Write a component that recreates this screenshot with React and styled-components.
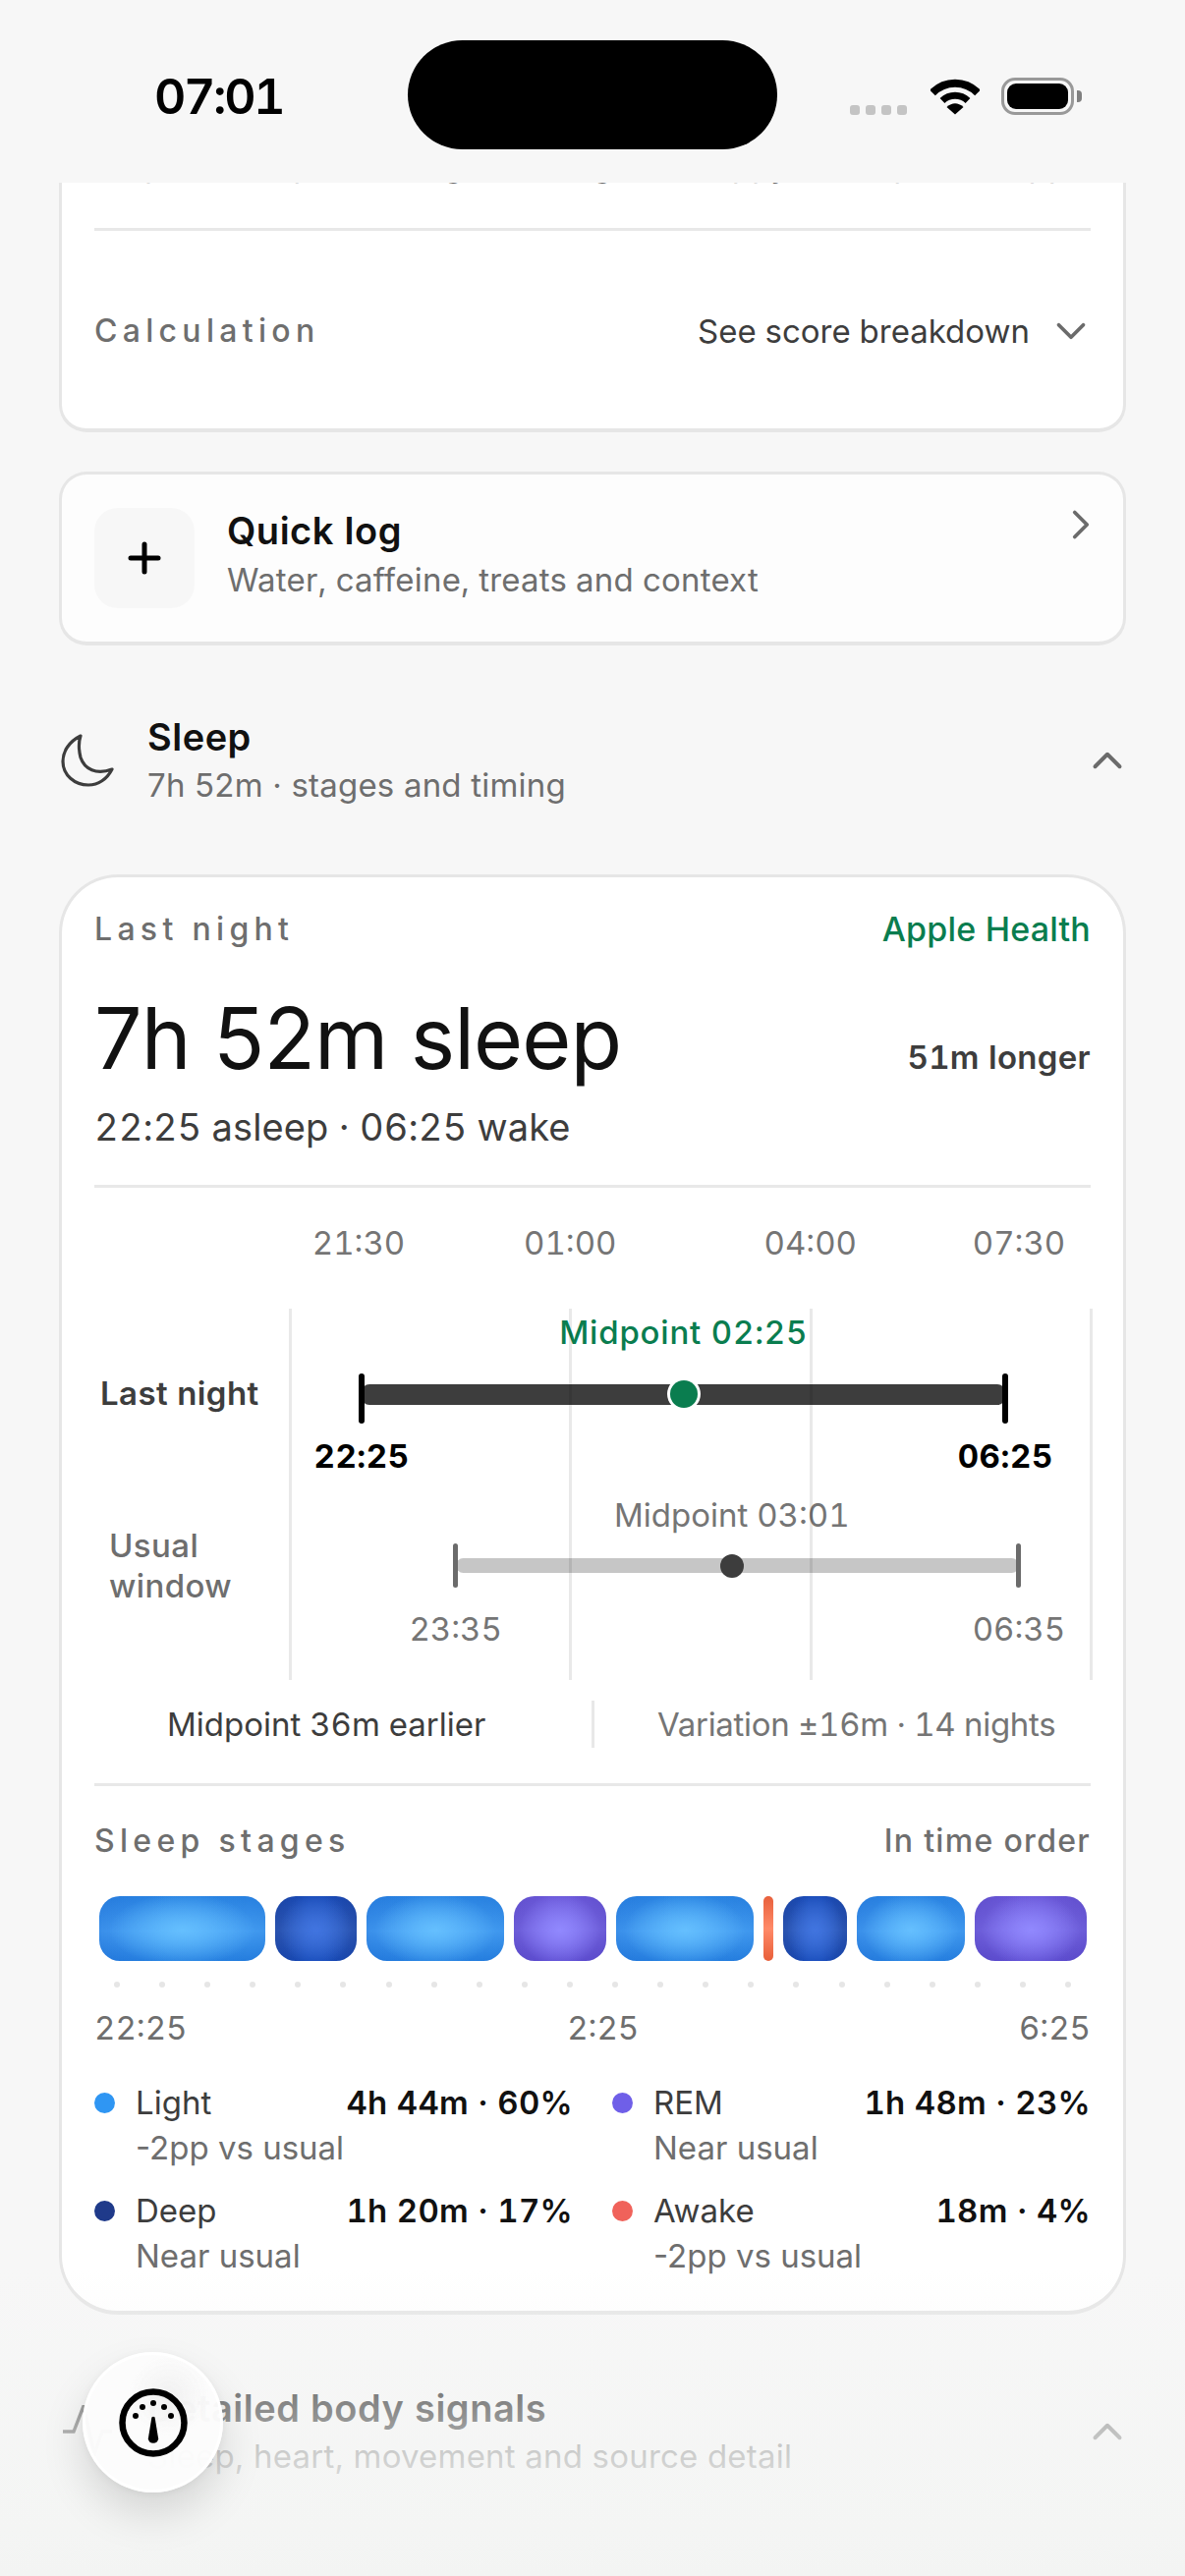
import React from "react";
import styled, { createGlobalStyle, css } from "styled-components";
import { ChevronDown, ChevronRight, ChevronUp, Plus } from "lucide-react";

const GlobalStyle = createGlobalStyle`
  html, body { margin: 0; padding: 0; background: #f7f7f7; }
  body { font-family: Inter, "Noto Sans", "Liberation Sans", sans-serif; color: #111; font-variant-numeric: tabular-nums; }
  * { box-sizing: border-box; }
`;

const Page = styled.div`
  position: relative; width: 1206px; height: 2622px; overflow: hidden;
  display: flex; flex-direction: column; background: #f7f7f7;
`;

/* status bar */
const StatusBar = styled.header`
  flex: none; height: 186px; padding: 41px 0 0 157px;
  display: flex; align-items: flex-start; background: #f7f7f7;
`;
const Clock = styled.div`
  width: 258px; margin-top: 39px; font-size: 50px; line-height: 37px; font-weight: 600;
  letter-spacing: -2.3px; color: #000;
`;
const Island = styled.div`width: 376px; height: 111px; border-radius: 56px; background: #000;`;
const StatusIcons = styled.div`
  margin: 37px 0 0 74px; height: 39px; display: flex; align-items: center;
`;
const SignalDots = styled.div`
  align-self: flex-end; display: flex; gap: 6px; margin-right: 24px;
`;
const SignalDot = styled.span`width: 10px; height: 10px; border-radius: 3px; background: #c4c4c4;`;
const Battery = styled.div`
  position: relative; margin-left: 22px; width: 74px; height: 38px; padding: 3px;
  border: 3px solid #999; border-radius: 14px;
  &::after {
    content: ""; position: absolute; right: -11px; top: 10px; width: 5px; height: 12px;
    background: #808080; border-radius: 0 4px 4px 0;
  }
`;
const BatteryFill = styled.div`width: 100%; height: 100%; background: #000; border-radius: 9px;`;

/* scrolling area */
const Viewport = styled.main`flex: 1; overflow: hidden; min-height: 0;`;
const Scroller = styled.div`margin-top: -40px; padding: 0 60px;`;

const Card = styled.section`
  background: #fff; border: 3px solid #e6e6e6; border-bottom-width: 4px; border-radius: 28px; padding: 0 33px;
`;
const ClippedLine = styled.p`
  margin: -1px 0 44px; height: 40px; font-size: 33px; line-height: 40px; white-space: nowrap;
  overflow: hidden; color: #6b6b6b;
`;
const Rule = styled.hr`
  margin: ${(p) => p.$top || 0}px 0 0; border: 0; height: 3px; background: #e8e8e8;
`;
const CalcRow = styled.div`
  margin: 82px 0 79px; height: 40px; display: flex; align-items: center; justify-content: space-between;
`;
const Eyebrow = styled.span`
  font-size: 32px; line-height: 40px; font-weight: 500; letter-spacing: 5.3px; color: #6e6e6e;
`;
const PlainEyebrow = styled(Eyebrow)`letter-spacing: 1.3px;`;
const CalcLink = styled.span`
  display: flex; align-items: center; gap: 17px; font-size: 33px; line-height: 40px; color: #3d3d3d;
  margin-right: -5px;
`;

/* quick log */
const QuickLog = styled(Card)`
  margin-top: 40px; height: 177px; padding: 34px 33px; display: flex; align-items: flex-start;
  background: #fdfdfd;
`;
const Tile = styled.div`
  flex: none; width: 102px; height: 102px; border-radius: 24px; background: #f7f7f7;
  display: flex; align-items: center; justify-content: center; margin-right: 33px;
`;
const QuickText = styled.div`flex: 1;`;
const QuickTitle = styled.div`font-size: 38px; line-height: 44px; margin-top: 1px; font-weight: 600; color: #111; letter-spacing: 0.5px;`;
const Muted = styled.div`font-size: 33px; line-height: 40px; color: #6e6e6e; letter-spacing: 0.2px;`;
const QuickSub = styled(Muted)`margin-top: 8px;`;
const QuickChevron = styled.div`margin: -8px -15px 0 0; color: #6b6b6b; display: flex;`;

/* section headers */
const SectionHead = styled.div`
  margin-top: ${(p) => p.$top}px; display: flex; align-items: center; color: #3d3d3d;
`;
const SectionIcon = styled.svg`flex: none; width: 54px; height: 54px; margin: 0 34px 0 2px;`;
const SectionText = styled.div`flex: 1;`;
const SectionTitle = styled.div`font-size: 38px; line-height: 44px; font-weight: 600; color: #111; letter-spacing: 0.5px;`;
const SectionSub = styled(Muted)`margin-top: 7px; font-variant-numeric: proportional-nums;`;
const SectionChevron = styled.div`display: flex; margin-right: -6px; color: #6b6b6b;`;

/* sleep card */
const SleepCard = styled(Card)`margin-top: 71px; border-radius: 60px; padding: 33px 33px 36px;`;
const SpreadRow = styled.div`
  display: flex; justify-content: space-between; align-items: center; height: 40px;
  margin-top: ${(p) => p.$top || 0}px;
`;
const SourceTag = styled.span`font-size: 34px; line-height: 40px; font-weight: 500; color: #0a7d4f; letter-spacing: 0.2px;`;
const HeroRow = styled.div`margin-top: 41px; display: flex; justify-content: space-between; align-items: baseline;`;
const HeroValue = styled.div`font-size: 86px; line-height: 100px; letter-spacing: -0.9px; color: #111; font-variant-numeric: proportional-nums;`;
const HeroDelta = styled.div`font-size: 33px; font-weight: 600; color: #3d3d3d; letter-spacing: 0.3px;`;
const HeroSub = styled.div`margin-top: 17px; font-size: 38px; line-height: 46px; color: #3d3d3d; letter-spacing: 0.1px;`;

/* timeline chart */
const AxisRow = styled.div`position: relative; margin: 36px 0 0 199px; height: 40px;`;
const AxisTick = styled.span`
  position: absolute; top: 0; transform: translateX(-50%); font-size: 33px; line-height: 40px; color: #757575;
`;
const Chart = styled.div`
  position: relative; margin-top: 47px; height: 378px;
  display: grid; grid-template-columns: 199px 817px; grid-template-rows: 187px 191px;
`;
const GridLines = styled.div`position: absolute; inset: 0 0 0 199px; pointer-events: none; z-index: 2;`;
const GridLine = styled.span`
  position: absolute; top: 0; bottom: 0; width: 3px; margin-left: -1px; background: rgba(0, 0, 0, 0.085);
`;
const RowLabel = styled.div`
  display: flex; align-items: center; padding-left: ${(p) => (p.$usual ? 15 : 6)}px;
  height: ${(p) => (p.$usual ? 150 : 173)}px;
  font-size: 33px; line-height: 41px; font-weight: ${(p) => (p.$usual ? 500 : 600)};
  letter-spacing: 0.4px;
  color: ${(p) => (p.$usual ? "#6e6e6e" : "#3d3d3d")};
`;
const Plot = styled.div`display: flex; flex-direction: column; margin-left: -2px; padding-top: ${(p) => p.$top}px;`;
const LabelLane = styled.div`position: relative; height: 40px; flex: none; margin-top: ${(p) => p.$top || 0}px;`;
const LaneLabel = styled.span`
  position: absolute; top: 0; transform: translateX(-50%); white-space: nowrap; font-size: 33px; line-height: 40px;
  ${(p) => p.$tone === "green" && css`color: #0a7d4f; font-weight: 500; letter-spacing: 0.8px;`}
  ${(p) => p.$tone === "grey" && css`color: #757575;`}
  ${(p) => p.$tone === "strong" && css`color: #000; font-weight: 700; letter-spacing: 0.6px;`}
`;
const Track = styled.div`position: relative; height: ${(p) => p.$h}px; margin-top: ${(p) => p.$top}px; flex: none;`;
const RangeBar = styled.div`
  position: absolute; top: ${(p) => p.$y}px; height: ${(p) => p.$h}px; border-radius: 8px;
  background: ${(p) => p.$color};
`;
const EndTick = styled.span`
  position: absolute; top: 0; bottom: 0; margin-left: -3px; width: ${(p) => p.$w}px; border-radius: 3px;
  background: ${(p) => p.$color};
`;
const MidDot = styled.span`
  position: absolute; top: 50%; transform: translate(-50%, -50%); z-index: 3;
  width: ${(p) => p.$size}px; height: ${(p) => p.$size}px; border-radius: 50%;
  background: ${(p) => p.$color};
  ${(p) => p.$ring && css`box-shadow: 0 0 0 3px #fff;`}
`;

const SummaryRow = styled.div`margin-top: 21px; height: 48px; display: flex; align-items: center;`;
const SummaryCell = styled.div`
  font-size: 33px; line-height: 40px; white-space: nowrap;
  ${(p) => (p.$muted
    ? css`color: #757575; padding-left: 64px; letter-spacing: -0.3px;`
    : css`color: #3d3d3d; width: 506px; padding-left: 74px;`)}
`;
const SummaryDivider = styled.span`width: 3px; height: 48px; background: #e8e8e8; flex: none;`;

/* stages */
const stageFills = {
  light: css`
    background:
      radial-gradient(ellipse 44% 56% at 50% 52%, rgba(104, 194, 255, 0.9), rgba(80, 170, 255, 0) 100%),
      linear-gradient(90deg, rgba(28, 104, 210, 0.35), rgba(40, 130, 230, 0) 40%, rgba(40, 130, 230, 0) 60%, rgba(28, 110, 210, 0.25)),
      linear-gradient(180deg, #2a84e2 0%, #4aa4f6 54%, #2680e0 100%);
  `,
  deep: css`
    background:
      radial-gradient(ellipse 44% 56% at 50% 52%, rgba(66, 118, 226, 0.9), rgba(60, 110, 220, 0) 100%),
      linear-gradient(90deg, rgba(22, 50, 130, 0.4), rgba(22, 50, 130, 0) 40%, rgba(22, 50, 130, 0) 60%, rgba(22, 50, 130, 0.4)),
      linear-gradient(180deg, #1a4cb8 0%, #3566ca 52%, #184cba 100%);
  `,
  rem: css`
    background:
      radial-gradient(ellipse 44% 56% at 50% 52%, rgba(146, 138, 255, 0.95), rgba(130, 120, 250, 0) 100%),
      linear-gradient(90deg, rgba(76, 58, 180, 0.35), rgba(76, 58, 180, 0) 40%, rgba(76, 58, 180, 0) 60%, rgba(76, 58, 180, 0.35)),
      linear-gradient(180deg, #6a58d8 0%, #7c6eea 52%, #5f4fd2 100%);
  `,
  awake: css`
    background: linear-gradient(180deg, #e8603c 0%, #ff8a68 50%, #e85f3a 100%);
  `,
};
const StageBar = styled.div`margin-top: 36px; padding: 0 4px 0 5px; display: flex; gap: 10px; height: 66px;`;
const Stage = styled.div`
  flex: ${(p) => p.$w} 1 0; min-width: 0;
  border-radius: ${(p) => (p.$kind === "awake" ? 5 : 21)}px;
  ${(p) => stageFills[p.$kind]}
`;
const DotRow = styled.div`margin-top: 21px; padding: 0 20px; display: flex; justify-content: space-between;`;
const AxisDot = styled.span`width: 6px; height: 6px; border-radius: 50%; background: #e6e6e6;`;
const StageAxis = styled.div`
  margin-top: 21px; display: flex; justify-content: space-between;
  font-size: 33px; line-height: 40px; color: #6e6e6e;
`;
const Legend = styled.div`margin-top: 36px; display: grid; grid-template-columns: 1fr 1fr; gap: 24px 40px;`;
const LegendItem = styled.div`display: grid; grid-template-columns: 21px 1fr auto; column-gap: 21px; row-gap: 6px; align-items: center;`;
const LegendDot = styled.span`width: 21px; height: 21px; border-radius: 50%; background: ${(p) => p.$color};`;
const LegendName = styled.span`font-size: 33px; line-height: 40px; color: #3d3d3d;`;
const LegendValue = styled.span`font-size: 33px; line-height: 40px; font-weight: 600; color: #111; white-space: nowrap; letter-spacing: 0.3px;`;
const LegendNote = styled.span`grid-column: 2 / 4; font-size: 33px; line-height: 40px; color: #6e6e6e; font-variant-numeric: proportional-nums;`;

const NextCard = styled(Card)`margin-top: 74px; height: 300px;`;

/* overlays */
const BottomFade = styled.div`
  position: absolute; left: 0; right: 0; bottom: 0; height: 312px; pointer-events: none;
  background: linear-gradient(180deg, rgba(244, 245, 244, 0) 0%, rgba(244, 245, 244, 0.53) 45%, rgba(244, 245, 244, 0.98) 84%, rgba(243, 244, 243, 1) 100%);
`;
const Fab = styled.button`
  position: absolute; left: 84px; top: 2394px; width: 143px; height: 143px; padding: 0; border-radius: 50%;
  border: 3px solid rgba(255, 255, 255, 0.95);
  background:
    radial-gradient(circle at 62% 30%, rgba(236, 236, 236, 0.7), rgba(255, 255, 255, 0) 32%),
    rgba(252, 252, 252, 0.96);
  box-shadow: 0 22px 44px rgba(0, 0, 0, 0.13), 0 2px 8px rgba(0, 0, 0, 0.05);
  display: flex; align-items: center; justify-content: center;
`;

const minutesFromStart = (hhmm) => {
  const [h, m] = hhmm.split(":").map(Number);
  return (((h * 60 + m) - (21 * 60 + 30)) + 1440) % 1440;
};
const pct = (hhmm) => `${(minutesFromStart(hhmm) / 600) * 100}%`;

const stages = [
  ["light", 169], ["deep", 83], ["light", 140], ["rem", 93], ["light", 140],
  ["awake", 10], ["deep", 65], ["light", 110], ["rem", 114],
];
const legend = [
  { name: "Light", value: "4h 44m · 60%", note: "-2pp vs usual", color: "#2f96f3" },
  { name: "REM", value: "1h 48m · 23%", note: "Near usual", color: "#6f5fe8" },
  { name: "Deep", value: "1h 20m · 17%", note: "Near usual", color: "#1f3a8a" },
  { name: "Awake", value: "18m · 4%", note: "-2pp vs usual", color: "#f0625a" },
];

const Wifi = () => (
  <svg width="50" height="38" viewBox="0 0 50 38" fill="none" aria-hidden="true">
    <path d="M2 15.5 A32 32 0 0 1 48 15.5" stroke="#000" strokeWidth="8" />
    <path d="M12 23.5 A19 19 0 0 1 38 23.5" stroke="#000" strokeWidth="7" />
    <path d="M25 37.5 L16.5 30 Q25 22.5 33.5 30 Z" fill="#000" />
  </svg>
);

const Gauge = () => (
  <svg width="70" height="70" viewBox="-35 -35 70 70" aria-hidden="true">
    <circle cx="0" cy="0" r="31.5" fill="none" stroke="#000" strokeWidth="6.5" />
    {[[-18, -7], [-11, -16], [0, -20], [11, -16], [18, -7]].map(([x, y]) => (
      <circle key={x + "," + y} cx={x} cy={y} r="3" fill="#000" />
    ))}
    <path d="M-1.6 -5.5 Q0 -7 1.6 -5.5 L5.2 16.5 A5.3 5.3 0 0 1 -5.2 16.5 Z" fill="#000" />
  </svg>
);

export default function App() {
  return (
    <Page>
      <GlobalStyle />
      <StatusBar>
        <Clock>07:01</Clock>
        <Island />
        <StatusIcons>
          <SignalDots>
            <SignalDot /><SignalDot /><SignalDot /><SignalDot />
          </SignalDots>
          <Wifi />
          <Battery><BatteryFill /></Battery>
        </StatusIcons>
      </StatusBar>

      <Viewport>
        <Scroller>
          <Card>
            <ClippedLine>Steps, timed pace and goal, and gets a happy and top rated app</ClippedLine>
            <Rule />
            <CalcRow>
              <Eyebrow>Calculation</Eyebrow>
              <CalcLink>See score breakdown <ChevronDown size={50} strokeWidth={1.8} color="#6b6b6b" /></CalcLink>
            </CalcRow>
          </Card>

          <QuickLog as="section">
            <Tile><Plus size={48} strokeWidth={2.5} color="#000" /></Tile>
            <QuickText>
              <QuickTitle>Quick log</QuickTitle>
              <QuickSub>Water, caffeine, treats and context</QuickSub>
            </QuickText>
            <QuickChevron><ChevronRight size={50} strokeWidth={1.8} /></QuickChevron>
          </QuickLog>

          <SectionHead $top={71}>
            <SectionIcon viewBox="0 0 54 54" fill="none" aria-hidden="true">
              <path d="M20 2 C8 8 2 18 2 28 C2 42 14 52 28 52 C38 52 47 46 52 36 C36 42 24 36 20 24 C18 16 18 8 20 2 Z" stroke="#3d3d3d" strokeWidth="3.2" strokeLinejoin="round" />
            </SectionIcon>
            <SectionText>
              <SectionTitle>Sleep</SectionTitle>
              <SectionSub>7h 52m · stages and timing</SectionSub>
            </SectionText>
            <SectionChevron><ChevronUp size={50} strokeWidth={1.9} /></SectionChevron>
          </SectionHead>

          <SleepCard>
            <SpreadRow>
              <Eyebrow>Last night</Eyebrow>
              <SourceTag>Apple Health</SourceTag>
            </SpreadRow>
            <HeroRow>
              <HeroValue>7h 52m sleep</HeroValue>
              <HeroDelta>51m longer</HeroDelta>
            </HeroRow>
            <HeroSub>22:25 asleep · 06:25 wake</HeroSub>
            <Rule $top={36} />

            <AxisRow>
              <AxisTick style={{ left: 70 }}>21:30</AxisTick>
              <AxisTick style={{ left: pct("01:00") }}>01:00</AxisTick>
              <AxisTick style={{ left: pct("04:00") }}>04:00</AxisTick>
              <AxisTick style={{ left: 742 }}>07:30</AxisTick>
            </AxisRow>

            <Chart>
              <GridLines>
                {["21:30", "01:00", "04:00", "07:30"].map((t) => (
                  <GridLine key={t} style={{ left: pct(t) }} />
                ))}
              </GridLines>
              <RowLabel>Last night</RowLabel>
              <Plot $top={4}>
                <LabelLane>
                  <LaneLabel $tone="green" style={{ left: pct("02:25") }}>Midpoint 02:25</LaneLabel>
                </LabelLane>
                <Track $h={51} $top={22}>
                  <RangeBar $y={11} $h={21} $color="#3d3d3d" style={{ left: pct("22:25"), width: `${(480 / 600) * 100}%` }} />
                  <EndTick $w={6} $color="#000" style={{ left: pct("22:25") }} />
                  <EndTick $w={6} $color="#000" style={{ left: pct("06:25") }} />
                  <MidDot $size={28} $color="#0a7d4f" $ring style={{ left: pct("02:25"), top: 21 }} />
                </Track>
                <LabelLane $top={13}>
                  <LaneLabel $tone="strong" style={{ left: pct("22:25") }}>22:25</LaneLabel>
                  <LaneLabel $tone="strong" style={{ left: pct("06:25") }}>06:25</LaneLabel>
                </LabelLane>
              </Plot>

              <RowLabel $usual>Usual<br />window</RowLabel>
              <Plot $top={3}>
                <LabelLane>
                  <LaneLabel $tone="grey" style={{ left: pct("03:01") }}>Midpoint 03:01</LaneLabel>
                </LabelLane>
                <Track $h={45} $top={9}>
                  <RangeBar $y={15} $h={15} $color="#c6c6c6" style={{ left: pct("23:35"), width: `${(420 / 600) * 100}%` }} />
                  <EndTick $w={5} $color="#6b6b6b" style={{ left: pct("23:35") }} />
                  <EndTick $w={5} $color="#6b6b6b" style={{ left: pct("06:35") }} />
                  <MidDot $size={24} $color="#3d3d3d" style={{ left: pct("03:01") }} />
                </Track>
                <LabelLane $top={22}>
                  <LaneLabel $tone="grey" style={{ left: pct("23:35") }}>23:35</LaneLabel>
                  <LaneLabel $tone="grey" style={{ left: pct("06:35") }}>06:35</LaneLabel>
                </LabelLane>
              </Plot>
            </Chart>

            <SummaryRow>
              <SummaryCell>Midpoint 36m earlier</SummaryCell>
              <SummaryDivider />
              <SummaryCell $muted>Variation ±16m · 14 nights</SummaryCell>
            </SummaryRow>
            <Rule $top={36} />

            <SpreadRow $top={36}>
              <Eyebrow>Sleep stages</Eyebrow>
              <PlainEyebrow>In time order</PlainEyebrow>
            </SpreadRow>
            <StageBar>
              {stages.map(([kind, w], i) => (
                <Stage key={i} $kind={kind} $w={w} />
              ))}
            </StageBar>
            <DotRow>
              {Array.from({ length: 22 }, (_, i) => <AxisDot key={i} />)}
            </DotRow>
            <StageAxis>
              <span>22:25</span><span>2:25</span><span>6:25</span>
            </StageAxis>
            <Legend>
              {legend.map((l) => (
                <LegendItem key={l.name}>
                  <LegendDot $color={l.color} />
                  <LegendName>{l.name}</LegendName>
                  <LegendValue>{l.value}</LegendValue>
                  <LegendNote>{l.note}</LegendNote>
                </LegendItem>
              ))}
            </Legend>
          </SleepCard>

          <SectionHead $top={73}>
            <SectionIcon viewBox="0 0 54 54" fill="none" aria-hidden="true">
              <path d="M2 27 H13 L23 1 L34 50 L42 27 H52" stroke="#3d3d3d" strokeWidth="3.4" strokeLinejoin="miter" />
            </SectionIcon>
            <SectionText>
              <SectionTitle>Detailed body signals</SectionTitle>
              <SectionSub>Sleep, heart, movement and source detail</SectionSub>
            </SectionText>
            <SectionChevron><ChevronUp size={50} strokeWidth={1.9} /></SectionChevron>
          </SectionHead>
          <NextCard />
        </Scroller>
      </Viewport>

      <BottomFade />
      <Fab aria-label="Dashboard"><Gauge /></Fab>
    </Page>
  );
}
